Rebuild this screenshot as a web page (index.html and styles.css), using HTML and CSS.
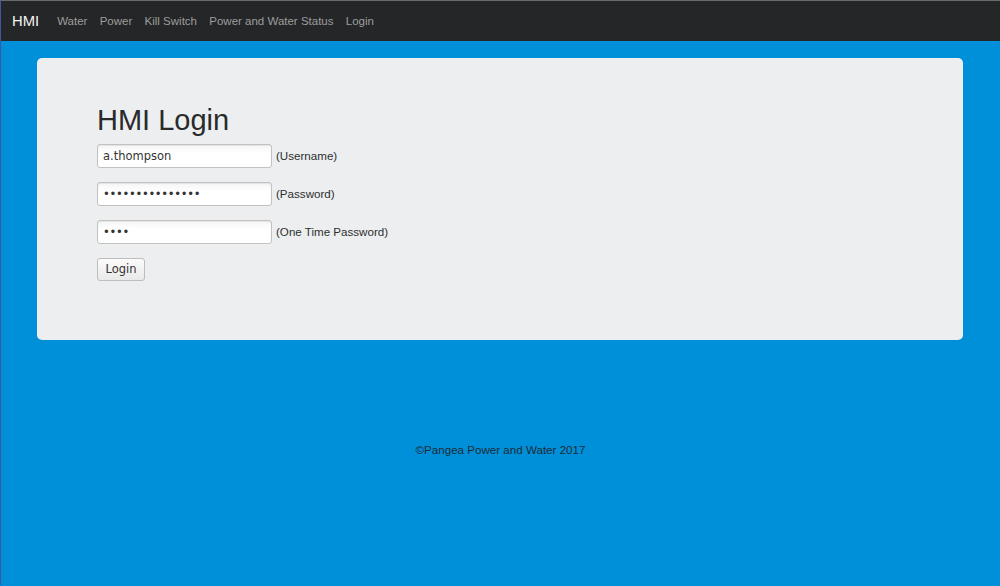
FILE: index.html
```html
<!DOCTYPE html>
<html lang="en">
<head>
<meta charset="utf-8">
<title>HMI Login</title>
<link rel="stylesheet" href="styles.css">
</head>
<body>
<nav class="navbar">
  <a class="brand" href="#">HMI</a>
  <ul class="nav-links">
    <li><a href="#">Water</a></li>
    <li><a href="#">Power</a></li>
    <li><a href="#">Kill Switch</a></li>
    <li><a href="#">Power and Water Status</a></li>
    <li><a href="#">Login</a></li>
  </ul>
</nav>
<main class="container">
  <section class="jumbotron">
    <h1 class="title">HMI Login</h1>
    <form class="login-form">
      <div class="row"><input class="field" type="text" value="a.thompson"><span class="hint">(Username)</span></div>
      <div class="row"><input class="field secret" type="password" value="passwordpasswor"><span class="hint">(Password)</span></div>
      <div class="row"><input class="field secret" type="password" value="1234"><span class="hint">(One Time Password)</span></div>
      <div class="row"><button class="btn" type="button">Login</button></div>
    </form>
  </section>
</main>
<footer class="footer">©Pangea Power and Water 2017</footer>
</body>
</html>
```
FILE: styles.css
```css
html, body {
  margin: 0;
  padding: 0;
}
body {
  min-height: 585px;
  background: #0090d9;
  font-family: "Liberation Sans", Arial, sans-serif;
  font-size: 11.5px;
  color: #333;
  border-top: 1px solid #6a6a6a;
  border-left: 1px solid rgba(120, 40, 120, 0.55);
  box-sizing: border-box;
}
.navbar {
  height: 40px;
  background: #252628;
  display: flex;
  align-items: center;
  padding-left: 11px;
}
.brand {
  color: #f2f2f2;
  text-decoration: none;
  font-size: 14.8px;
  margin-right: 18px;
}
.nav-links {
  list-style: none;
  margin: 0;
  padding: 0;
  display: flex;
  gap: 12.3px;
}
.nav-links a {
  color: #9d9d9d;
  text-decoration: none;
  font-size: 11.5px;
}
.container {
  padding: 17px 37px 0 36px;
}
.jumbotron {
  background: #eceef0;
  border-radius: 5px;
  padding: 46px 60px 59px 60px;
}
.title {
  margin: 0 0 7px 0;
  font-size: 29px;
  line-height: 32.5px;
  font-weight: normal;
  color: #2a2a2a;
}
.login-form {
  display: flex;
  flex-direction: column;
  gap: 14px;
}
.row {
  display: flex;
  align-items: center;
  gap: 4px;
}
.field {
  box-sizing: border-box;
  width: 175px;
  height: 24px;
  margin: 0;
  padding: 0 5px;
  border: 1px solid #c2c2c2;
  border-radius: 3px;
  background: linear-gradient(#f6f6f6, #ffffff 40%);
  box-shadow: inset 0 1px 1px rgba(0, 0, 0, 0.08);
  font-family: "DejaVu Sans", sans-serif;
  font-size: 11.5px;
  color: #333;
}
.secret {
  letter-spacing: -0.3px;
}
.hint {
  font-size: 11.6px;
  color: #2e2e2e;
}
.btn {
  box-sizing: border-box;
  width: 48px;
  height: 23px;
  margin: 0;
  padding: 0;
  border: 1px solid #bdbdbd;
  border-radius: 3px;
  background: linear-gradient(#fbfbfb, #e9e9e9);
  font-family: "DejaVu Sans", sans-serif;
  font-size: 11.5px;
  color: #333;
}
.footer {
  margin-top: 102px;
  text-align: center;
  line-height: 16px;
  font-size: 11.6px;
  color: #1e2b35;
}
```
